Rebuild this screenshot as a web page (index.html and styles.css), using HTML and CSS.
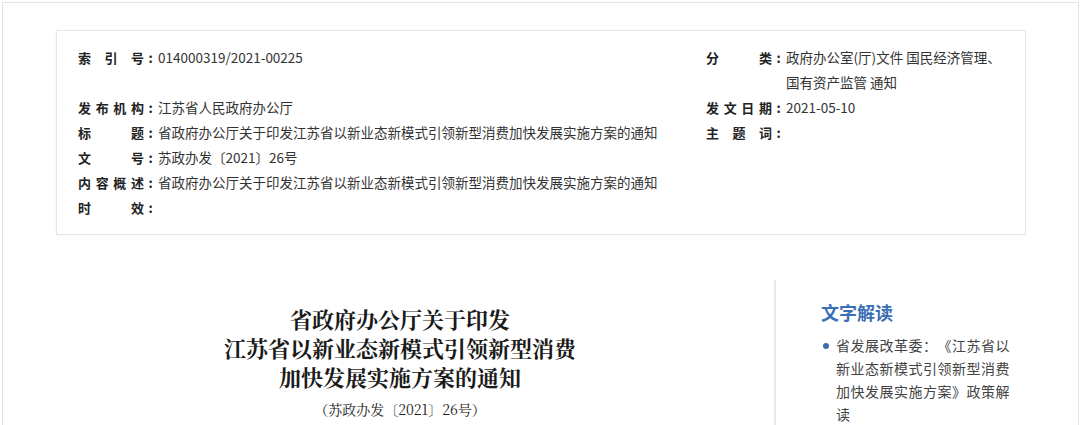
FILE: index.html
```html
<!DOCTYPE html>
<html lang="zh-CN">
<head>
<meta charset="utf-8">
<title>省政府办公厅关于印发江苏省以新业态新模式引领新型消费加快发展实施方案的通知</title>
<link rel="stylesheet" href="styles.css">
</head>
<body>
<div class="page">
  <div class="meta">
    <div class="cell"><span class="label">索引号</span><span class="colon">:</span><span class="value">014000319/2021-00225</span></div>
    <div class="cell"><span class="label">分类</span><span class="colon">:</span><span class="value">政府办公室(厅)文件 国民经济管理、国有资产监管 通知</span></div>
    <div class="cell"><span class="label">发布机构</span><span class="colon">:</span><span class="value">江苏省人民政府办公厅</span></div>
    <div class="cell"><span class="label">发文日期</span><span class="colon">:</span><span class="value">2021-05-10</span></div>
    <div class="cell"><span class="label">标题</span><span class="colon">:</span><span class="value">省政府办公厅关于印发江苏省以新业态新模式引领新型消费加快发展实施方案的通知</span></div>
    <div class="cell"><span class="label">主题词</span><span class="colon">:</span><span class="value"></span></div>
    <div class="cell"><span class="label">文号</span><span class="colon">:</span><span class="value">苏政办发〔2021〕26号</span></div>
    <div class="cell"></div>
    <div class="cell"><span class="label">内容概述</span><span class="colon">:</span><span class="value">省政府办公厅关于印发江苏省以新业态新模式引领新型消费加快发展实施方案的通知</span></div>
    <div class="cell"></div>
    <div class="cell"><span class="label">时效</span><span class="colon">:</span><span class="value"></span></div>
    <div class="cell"></div>
  </div>

  <div class="content">
    <div class="main">
      <h1 class="doc-title">省政府办公厅关于印发<br>江苏省以新业态新模式引领新型消费<br>加快发展实施方案的通知</h1>
      <p class="doc-no">（苏政办发〔2021〕26号）</p>
    </div>
    <aside class="side">
      <h2 class="side-title">文字解读</h2>
      <ul class="side-list">
        <li>省发展改革委：《江苏省以新业态新模式引领新型消费加快发展实施方案》政策解读</li>
      </ul>
    </aside>
  </div>
</div>
</body>
</html>
```

FILE: styles.css
```css
html, body {
  margin: 0;
  padding: 0;
  background: #ffffff;
}

body {
  font-family: "Noto Sans CJK SC", "Liberation Sans", sans-serif;
  color: #333;
  text-spacing-trim: space-all;
}

.page {
  margin: 2px 1px 0 2px;
  border: 1px solid #e4e4e4;
  border-bottom: none;
  padding: 27px 52px 0 53px;
  min-height: 440px;
  box-sizing: border-box;
}

.meta {
  border: 1px solid #e6e6e6;
  box-shadow: 0 0 3px rgba(0, 0, 0, 0.04);
  padding: 14px 22px 14px 21px;
  display: grid;
  grid-template-columns: 628px 1fr;
  font-size: 13px;
  line-height: 25px;
}

.cell {
  display: flex;
  align-items: flex-start;
  min-height: 25px;
}

.label {
  flex: none;
  width: 66px;
  font-weight: 700;
  color: #222;
  text-align: justify;
  text-align-last: justify;
}

.colon {
  flex: none;
  width: 13px;
  text-align: center;
  font-weight: 700;
  color: #222;
}

.value {
  flex: 1;
  font-size: 13.5px;
  color: #333;
  padding-left: 1px;
}

.content {
  display: flex;
  margin-top: 45px;
}

.main {
  width: 718px;
  padding-top: 24px;
  text-align: center;
  padding-right: 30px;
  box-sizing: border-box;
}

.doc-title {
  margin: 0;
  font-family: "Noto Serif CJK SC", "Noto Sans CJK SC", serif;
  font-weight: 700;
  font-size: 22px;
  line-height: 29px;
  color: #1a1a1a;
}

.doc-no {
  margin: 8px 0 0;
  font-family: "Noto Serif CJK SC", "Noto Sans CJK SC", serif;
  font-size: 14px;
  line-height: 20px;
  color: #222;
}

.side {
  flex: 1;
  border-left: 2px solid #e8e8e8;
  padding: 20px 0 0 45px;
}

.side-title {
  margin: 0;
  font-size: 18px;
  line-height: 24px;
  font-weight: 700;
  color: #3b6fb5;
}

.side-list {
  list-style: none;
  margin: 10px 0 0;
  padding: 0;
}

.side-list li {
  position: relative;
  padding-left: 15px;
  width: 178px;
  font-size: 14px;
  line-height: 23px;
  letter-spacing: 0.5px;
  color: #444;
}

.side-list li::before {
  content: "";
  position: absolute;
  left: 2px;
  top: 9px;
  width: 6px;
  height: 6px;
  border-radius: 50%;
  background: #3d6ea8;
}
```
